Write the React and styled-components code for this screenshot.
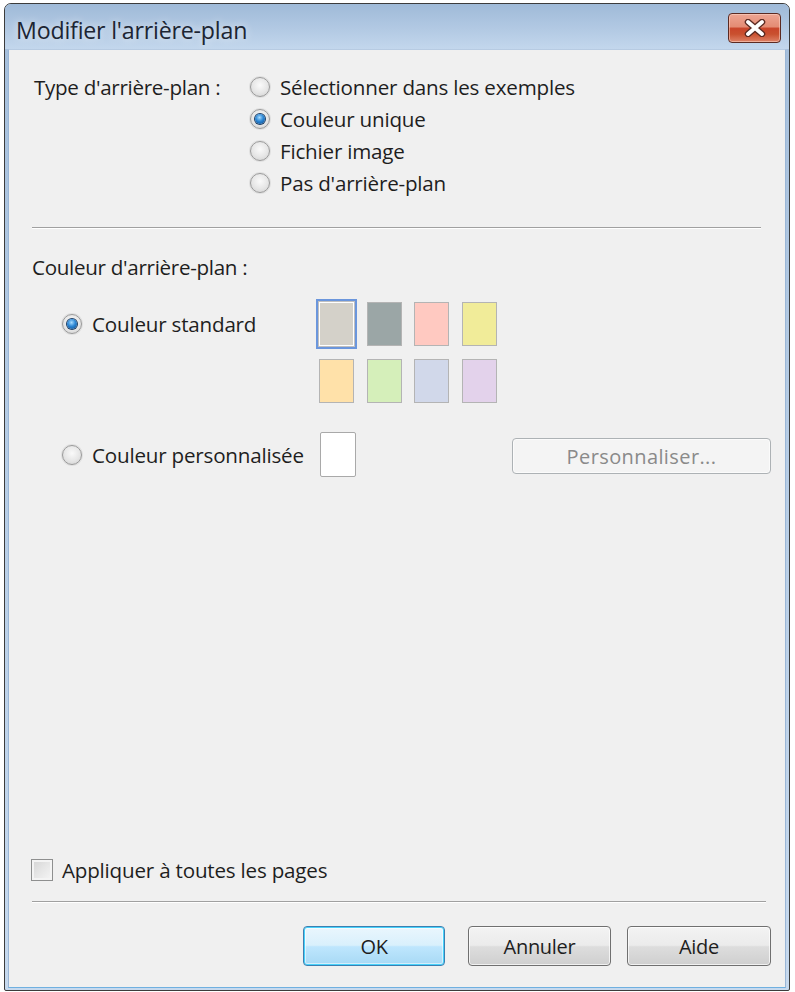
import React, { useState } from 'react';
import styled, { createGlobalStyle } from 'styled-components';

const GlobalStyle = createGlobalStyle`
  html, body {
    margin: 0;
    background: #ffffff;
  }
  * { box-sizing: border-box; }
`;

const Page = styled.div`
  padding: 3px 5px 1px 4px;
  font-family: 'Open Sans', 'Noto Sans', sans-serif;
  color: #1e1e1e;
`;

const Window = styled.div`
  width: 786px;
  height: 988px;
  border: 1px solid #3c3c3c;
  border-radius: 7px 7px 2px 2px;
  background: linear-gradient(180deg, #a4bedb 0%, #b4cbe4 40%, #c6d9ee 100%);
  display: flex;
  flex-direction: column;
  overflow: hidden;
  box-shadow: inset 0 1px 0 rgba(255, 255, 255, 0.6);
`;

const TitleBar = styled.div`
  height: 45px;
  flex: none;
  display: flex;
  align-items: center;
  justify-content: space-between;
  padding: 4px 8px 0 11px;
  background: linear-gradient(180deg, #9fbad8 0%, #b2c9e3 55%, #c3d7ed 100%);
`;

const Title = styled.div`
  font-size: 23.2px;
  color: #1c2533;
  text-shadow: 0 0 8px rgba(255, 255, 255, 0.8);
  letter-spacing: -0.2px;
  margin-top: 2px;
`;

const CloseButton = styled.button`
  width: 53px;
  height: 30px;
  margin-top: -2px;
  border: 1px solid #5b2a22;
  border-radius: 4px;
  padding: 0;
  display: flex;
  align-items: center;
  justify-content: center;
  background: linear-gradient(180deg, #eda593 0%, #e48c74 45%, #c9452a 52%, #c9502f 72%, #de8267 100%);
  box-shadow: inset 0 0 0 1px rgba(255, 215, 200, 0.55);
`;

const Body = styled.div`
  flex: 1;
  padding: 0 3px 2px 3px;
  display: flex;
`;

const Content = styled.div`
  flex: 1;
  background: #f0f0f0;
  border: 1px solid #9ab6d6;
  border-top-color: #b7cbe2;
  border-bottom-color: #6fb0e0;
  display: flex;
  flex-direction: column;
  padding: 21px 14px 21px 22px;
  font-size: 20.6px;
`;

const TypeRow = styled.div`
  display: flex;
  align-items: flex-start;
`;

const TypeLabel = styled.div`
  width: 216px;
  margin-left: 3px;
  height: 32px;
  display: flex;
  align-items: center;
  letter-spacing: -0.3px;
`;

const OptionList = styled.div`
  display: flex;
  flex-direction: column;
`;

const Option = styled.label`
  display: flex;
  align-items: center;
  gap: 10px;
  height: ${p => p.$height || 32}px;
  letter-spacing: -0.2px;
  cursor: default;
`;

const Radio = styled.span`
  width: 20px;
  height: 20px;
  flex: none;
  border-radius: 50%;
  border: 1px solid #9a9a9a;
  background: radial-gradient(circle at 50% 40%, #fafafa 0%, #e6e6e6 55%, #cdcdcd 100%);
  box-shadow: 0 0 0 1px #e0e0e0;
  display: flex;
  align-items: center;
  justify-content: center;

  &::after {
    content: '';
    display: ${p => (p.$checked ? 'block' : 'none')};
    width: 10px;
    height: 10px;
    border-radius: 50%;
    background: radial-gradient(circle at 45% 35%, #a8dcff 0%, #2b86d4 45%, #0b4688 100%);
    box-shadow: 0 0 0 1px #1d3f66;
  }
`;

const Separator = styled.div`
  height: 2px;
  flex: none;
  margin-top: ${p => p.$top}px;
  margin-right: ${p => p.$right}px;
  margin-left: 1px;
  border-top: 1px solid #a0a0a0;
  border-bottom: 1px solid #ffffff;
`;

const SectionLabel = styled.div`
  margin-top: 26px;
  height: 24px;
  display: flex;
  align-items: center;
  margin-left: 1px;
  letter-spacing: -0.3px;
`;

const StandardRow = styled.div`
  display: flex;
  align-items: flex-start;
  margin-top: 23px;
  margin-left: 31px;
`;

const LeftCell = styled.div`
  width: 257px;
  flex: none;
`;

const SwatchGrid = styled.div`
  display: grid;
  grid-template-columns: repeat(4, 35px);
  grid-auto-rows: 44px;
  column-gap: 12.5px;
  row-gap: 13px;
`;

const Swatch = styled.div`
  background: ${p => p.$color};
  border: 1px solid ${p => (p.$selected ? '#ffffff' : '#b4b4b4')};
  box-shadow: ${p => (p.$selected ? '0 0 0 1px #c0c0c0, 0 0 0 3px #6b96dc' : 'none')};
`;

const CustomRow = styled.div`
  display: flex;
  align-items: center;
  margin-top: 29px;
  margin-left: 31px;
`;

const CustomBox = styled.div`
  width: 36px;
  height: 45px;
  flex: none;
  background: #ffffff;
  border: 1px solid #a9a9a9;
  border-radius: 2px;
  margin-left: 1px;
`;

const Button = styled.button`
  width: ${p => p.$width || 143}px;
  height: ${p => p.$height || 40}px;
  font-family: inherit;
  font-size: 20px;
  letter-spacing: -0.3px;
  color: #1e1e1e;
  border: 1px solid #707070;
  border-radius: 4px;
  padding: 0;
  background: linear-gradient(180deg, #f3f3f3 0%, #ebebeb 48%, #dddddd 52%, #cfcfcf 100%);
  box-shadow: inset 0 0 0 1px rgba(255, 255, 255, 0.7);

  &:disabled {
    color: #8a8a8a;
    border-color: #adb2b5;
    background: #f4f4f4;
    box-shadow: inset 0 0 0 1px #fbfbfb;
  }
`;

const DefaultButton = styled(Button)`
  border-color: #3c7fb1;
  background: linear-gradient(180deg, #eaf6fd 0%, #d9f0fc 48%, #bee6fd 52%, #a7d9f5 100%);
  box-shadow: inset 0 0 0 1px #48d2fb, inset 0 0 0 2px rgba(255, 255, 255, 0.5);
`;

const CustomizeButton = styled(Button)`
  margin-left: auto;
  margin-top: 3px;
  letter-spacing: 0.4px;
`;

const Spacer = styled.div`
  flex: 1;
`;

const CheckRow = styled.label`
  display: flex;
  align-items: center;
  gap: 9px;
  height: 24px;
  margin-left: 0;
  letter-spacing: -0.2px;
`;

const CheckBox = styled.span`
  width: 22px;
  height: 22px;
  flex: none;
  border: 1px solid #8e8f8f;
  background: linear-gradient(135deg, #d4d4d4 0%, #e6e6e6 50%, #f6f6f6 100%);
  box-shadow: inset 0 0 0 2px #f4f4f4;
`;

const Footer = styled.div`
  display: flex;
  justify-content: flex-end;
  gap: 16px;
  margin-top: 23px;
`;

const swatches = [
  '#d4d1c9', '#9ba6a6', '#ffc9c1', '#f1ec99',
  '#ffe1a9', '#d5efba', '#d1d8ea', '#e3d2eb',
];

function CloseIcon() {
  return (
    <svg width="24" height="18" viewBox="0 0 24 18">
      <path d="M5 3 L19 15 M19 3 L5 15" stroke="#5a2a22" strokeWidth="6.5" strokeLinecap="round" />
      <path d="M5 3 L19 15 M19 3 L5 15" stroke="#ffffff" strokeWidth="3.8" strokeLinecap="round" />
    </svg>
  );
}

export default function App() {
  const [type, setType] = useState('unique');
  const [mode, setMode] = useState('standard');
  const [selected, setSelected] = useState(0);

  const types = [
    { id: 'exemples', label: 'Sélectionner dans les exemples' },
    { id: 'unique', label: 'Couleur unique' },
    { id: 'image', label: 'Fichier image' },
    { id: 'none', label: "Pas d'arrière-plan" },
  ];

  return (
    <Page>
      <GlobalStyle />
      <Window>
        <TitleBar>
          <Title>Modifier l'arrière-plan</Title>
          <CloseButton aria-label="Fermer">
            <CloseIcon />
          </CloseButton>
        </TitleBar>
        <Body>
          <Content>
            <TypeRow>
              <TypeLabel>Type d'arrière-plan :</TypeLabel>
              <OptionList>
                {types.map(t => (
                  <Option key={t.id} onClick={() => setType(t.id)}>
                    <Radio $checked={type === t.id} />
                    {t.label}
                  </Option>
                ))}
              </OptionList>
            </TypeRow>

            <Separator $top={28} $right={10} />

            <SectionLabel>Couleur d'arrière-plan :</SectionLabel>

            <StandardRow>
              <LeftCell>
                <Option $height={44} onClick={() => setMode('standard')}>
                  <Radio $checked={mode === 'standard'} />
                  Couleur standard
                </Option>
              </LeftCell>
              <SwatchGrid>
                {swatches.map((c, i) => (
                  <Swatch key={c} $color={c} $selected={selected === i} onClick={() => setSelected(i)} />
                ))}
              </SwatchGrid>
            </StandardRow>

            <CustomRow>
              <LeftCell>
                <Option $height={45} onClick={() => setMode('custom')}>
                  <Radio $checked={mode === 'custom'} />
                  Couleur personnalisée
                </Option>
              </LeftCell>
              <CustomBox />
              <CustomizeButton $width={259} $height={36} disabled>
                Personnaliser...
              </CustomizeButton>
            </CustomRow>

            <Spacer />

            <CheckRow>
              <CheckBox />
              Appliquer à toutes les pages
            </CheckRow>

            <Separator $top={19} $right={5} />

            <Footer>
              <DefaultButton $width={142} style={{ marginRight: 7 }}>OK</DefaultButton>
              <Button>Annuler</Button>
              <Button $width={144}>Aide</Button>
            </Footer>
          </Content>
        </Body>
      </Window>
    </Page>
  );
}
